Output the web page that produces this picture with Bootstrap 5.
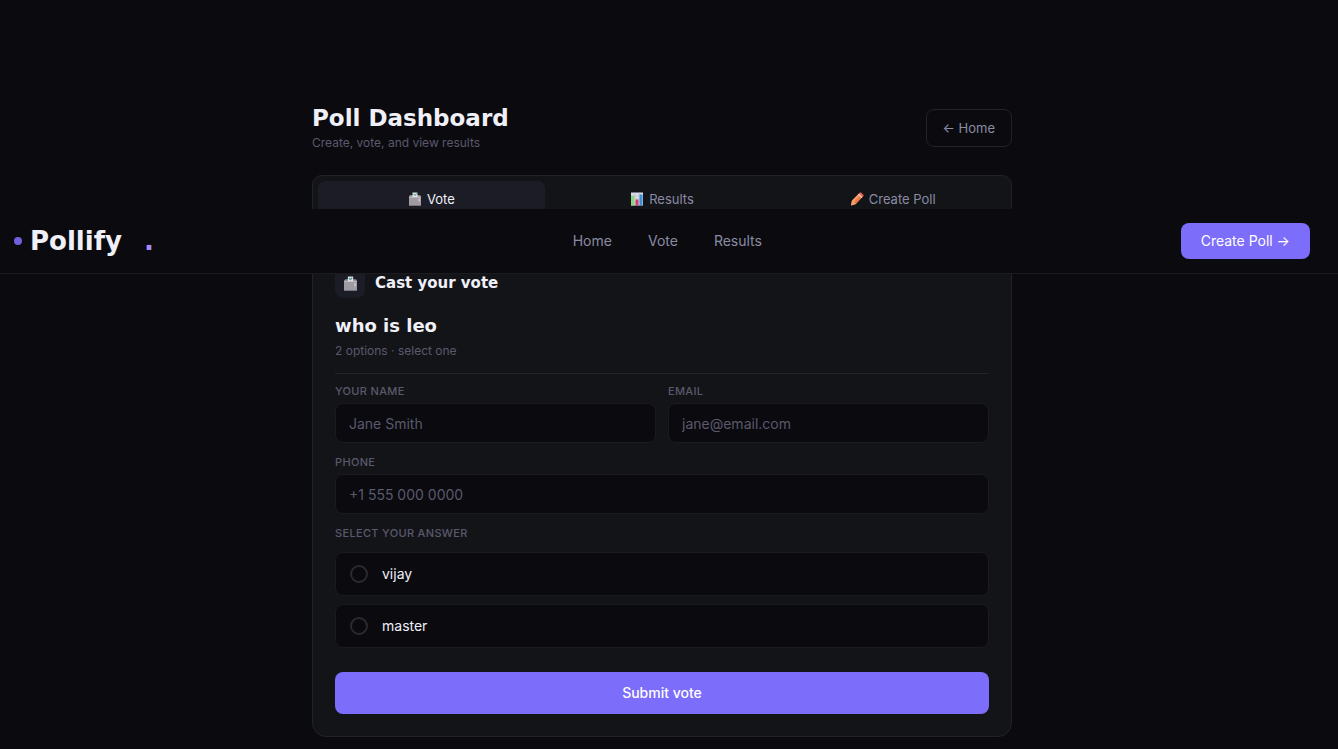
<!DOCTYPE html>
<html lang="en" data-bs-theme="dark">
<head>
<meta charset="utf-8">
<meta name="viewport" content="width=device-width, initial-scale=1">
<title>Pollify - Poll Dashboard</title>
<link href="https://cdn.jsdelivr.net/npm/bootstrap@5.3.0/dist/css/bootstrap.min.css" rel="stylesheet">
<style>
  :root {
    --ink: #0a0a0f;
    --panel: #131418;
    --raised: #1c1c26;
    --line: #222327;
    --line-soft: #1a1a1f;
    --text: #f0f0f8;
    --muted: #8b8aa3;
    --dim: #5a596d;
    --accent: #7c6dfa;
  }
  body {
    background: var(--ink);
    color: var(--text);
    font: 14px/20px Inter, "Liberation Sans", sans-serif;
    padding-right: 14px;
  }
  .display-face { font-family: "DejaVu Sans", sans-serif; font-weight: 700; margin: 0; color: var(--text); }
  .dashboard { max-width: 700px; padding: 103px 0 12px; }
  .page-title { font-size: 23px; line-height: 30px; }
  .note { font-size: 12px; line-height: 20px; color: var(--dim); margin: 0; }
  .site-nav {
    position: absolute; top: 209px; left: 0; right: 0; z-index: 10;
    height: 65px; padding: 0 28px 0 14px;
    background: var(--ink); border-bottom: 1px solid var(--line-soft);
  }
  .brand { font-size: 26px; line-height: 30px; min-width: 140px; }
  .brand-dot { width: 8px; height: 8px; background: #6f61dc; }
  .brand-stop { color: #a78bfa; }
  .links { gap: 36px; }
  .links a, .site-nav .brand { text-decoration: none; }
  .links a { color: var(--muted); }
  .btn-accent {
    --bs-btn-color: #fff; --bs-btn-bg: var(--accent); --bs-btn-hover-color: #fff; --bs-btn-hover-bg: #8b7efb;
    --bs-btn-active-color: #fff; --bs-btn-active-bg: #6b5ce8; --bs-btn-border-width: 0;
    --bs-btn-font-size: 14px; --bs-btn-line-height: 20px; --bs-btn-border-radius: 8px;
    --bs-btn-padding-x: 20px; --bs-btn-padding-y: 8px; --bs-btn-font-weight: 400;
  }
  .btn-submit { --bs-btn-padding-y: 11px; --bs-btn-font-weight: 500; margin-top: 24px; }
  .btn-quiet {
    --bs-btn-color: var(--muted); --bs-btn-border-color: var(--line); --bs-btn-hover-color: var(--text);
    --bs-btn-hover-border-color: var(--dim); --bs-btn-font-size: 13px; --bs-btn-line-height: 20px;
    --bs-btn-border-radius: 8px; --bs-btn-padding-x: 16px; --bs-btn-padding-y: 8px;
  }
  .tab-strip { background: var(--panel); border: 1px solid var(--line); border-radius: 10px; padding: 5px; gap: 4px; margin-top: 22px; }
  .tab-strip .nav-link {
    height: 36px; padding: 0; gap: 5px; border: 0; border-radius: 7px; background: transparent; color: var(--muted);
    font-size: 13px; display: flex; align-items: center; justify-content: center;
  }
  .tab-strip .nav-link.active { background: var(--raised); color: var(--text); }
  .vote-panel { background: var(--panel); border: 1px solid var(--line); border-radius: 14px; padding: 22px; margin-top: 22px; }
  .panel-head { gap: 10px; }
  .icon-tile { width: 30px; height: 30px; border-radius: 8px; background: var(--raised); }
  .panel-title { font-size: 15px; line-height: 20px; }
  .question { font-size: 18px; line-height: 24px; margin: 16px 0 3px; }
  .question-head { padding-bottom: 12px; border-bottom: 1px solid var(--line); margin-bottom: 9px; }
  .fields { --bs-gutter-x: 12px; --bs-gutter-y: 11px; }
  .caption {
    display: block; font-size: 11px; line-height: 16px; font-weight: 500; letter-spacing: .03em;
    text-transform: uppercase; color: var(--dim); margin: 0 0 4px;
  }
  .fields .form-control {
    height: 40px; padding: 0 13px; font-size: 14px; background: var(--ink); color: var(--text);
    border: 1px solid var(--line-soft); border-radius: 8px;
  }
  .fields .form-control::placeholder { color: var(--dim); }
  .answers { border: 0; margin: 11px 0 0; }
  .answers .caption { margin-bottom: 11px; }
  .choice { height: 44px; padding: 0 14px; gap: 14px; background: var(--ink); border: 1px solid var(--line-soft); border-radius: 8px; }
  .choice .form-check-input { width: 18px; height: 18px; margin: 0; border: 2px solid #2a2a2f; background-color: transparent; }
  .choice .form-check-input:checked { border-color: var(--accent); background-color: var(--accent); }
</style>
</head>
<body>
<svg class="d-none" aria-hidden="true">
  <symbol id="ballot" viewBox="0 0 14 14">
    <path d="M1 4.500 2 3h10l1 1.500v9H1z" fill="#8d8990"/>
    <path d="M1 4.500h12v1.500H1z" fill="#b9b5bb"/>
    <path d="M1 6h12v7.500H1z" fill="#a09ba2"/>
    <path d="M10.500 6.500h1.500v3h-1.500z" fill="#ccc8ce"/>
    <path d="M4.500.5h5V5h-5z" fill="#dce5e5"/>
    <path d="m5.500 2 1.500 1.500L8.500 1.500" fill="none" stroke="#4c9089"/>
  </symbol>
  <symbol id="chart" viewBox="0 0 14 14">
    <path d="M1 .5h12v13H1z" fill="#d9dbe8"/>
    <path d="M1 4h12M1 7h12M1 10h12M5 .5v13M9 .5v13" stroke="#b9bbcb" stroke-width=".5"/>
    <path d="M1 3.500h3.500v10H1z" fill="#8ed47b"/>
    <path d="M5.500 7.500h3v6h-3z" fill="#d13c76"/>
    <path d="M9.500 2.500h3v11h-3z" fill="#3e8fd2"/>
  </symbol>
  <symbol id="crayon" viewBox="0 0 14 14">
    <path d="m1 13.500 1-5L9.500 1q1-1 2 0l1.500 1.500q1 1 0 2L6 12z" fill="#ef7948"/>
    <path d="m2 8.500 6-6L10 4l-7 7z" fill="#f79a62"/>
    <path d="m8 2.500 1-1 3.500 3.500-1 1z" fill="#efd2c9"/>
    <path d="m9 1.500.5-.5q1-1 2 0l1.500 1.500q1 1 0 2l-.5.5z" fill="#dd5954"/>
    <path d="m1 13.500 1-5L6 12z" fill="#efa675"/>
  </symbol>
</svg>

<nav class="site-nav d-flex align-items-center justify-content-between" aria-label="Main">
  <a href="#" class="brand display-face d-flex align-items-center gap-2"><span class="brand-dot rounded-circle"></span><span>Pollify</span><span class="brand-stop ms-auto">.</span></a>
  <div class="links d-flex">
    <a href="#">Home</a><a href="#vote">Vote</a><a href="#results">Results</a>
  </div>
  <button type="button" class="btn btn-accent">Create Poll →</button>
</nav>

<main class="dashboard container-fluid">
  <header class="d-flex align-items-center justify-content-between">
    <div>
      <h1 class="page-title display-face">Poll Dashboard</h1>
      <p class="note">Create, vote, and view results</p>
    </div>
    <button type="button" class="btn btn-quiet">← Home</button>
  </header>

  <div class="tab-strip nav nav-fill flex-nowrap" role="tablist">
    <button type="button" role="tab" class="nav-link active w-100" aria-selected="true"><svg width="14" height="14"><use href="#ballot"/></svg>Vote</button>
    <button type="button" role="tab" class="nav-link w-100" aria-selected="false"><svg width="14" height="14"><use href="#chart"/></svg>Results</button>
    <button type="button" role="tab" class="nav-link w-100" aria-selected="false"><svg width="14" height="14"><use href="#crayon"/></svg>Create Poll</button>
  </div>

  <section class="vote-panel" id="vote">
    <div class="panel-head d-flex align-items-center">
      <span class="icon-tile d-flex align-items-center justify-content-center"><svg width="15" height="15"><use href="#ballot"/></svg></span>
      <h2 class="panel-title display-face">Cast your vote</h2>
    </div>
    <div class="question-head">
      <h3 class="question display-face">who is leo</h3>
      <p class="note">2 options · select one</p>
    </div>
    <form>
      <div class="row fields">
        <div class="col-6"><label class="caption" for="name">Your name</label><input class="form-control" id="name" type="text" placeholder="Jane Smith"></div>
        <div class="col-6"><label class="caption" for="email">Email</label><input class="form-control" id="email" type="email" placeholder="jane@email.com"></div>
        <div class="col-12"><label class="caption" for="phone">Phone</label><input class="form-control" id="phone" type="tel" placeholder="+1 555 000 0000"></div>
      </div>
      <fieldset class="answers">
        <legend class="caption">Select your answer</legend>
        <div class="d-grid gap-2">
          <label class="choice d-flex align-items-center"><input class="form-check-input" type="radio" name="answer" value="vijay">vijay</label>
          <label class="choice d-flex align-items-center"><input class="form-check-input" type="radio" name="answer" value="master">master</label>
        </div>
      </fieldset>
      <button type="submit" class="btn btn-accent btn-submit w-100">Submit vote</button>
    </form>
  </section>
</main>
<script src="https://cdn.jsdelivr.net/npm/bootstrap@5.3.0/dist/js/bootstrap.bundle.min.js"></script>
</body>
</html>
